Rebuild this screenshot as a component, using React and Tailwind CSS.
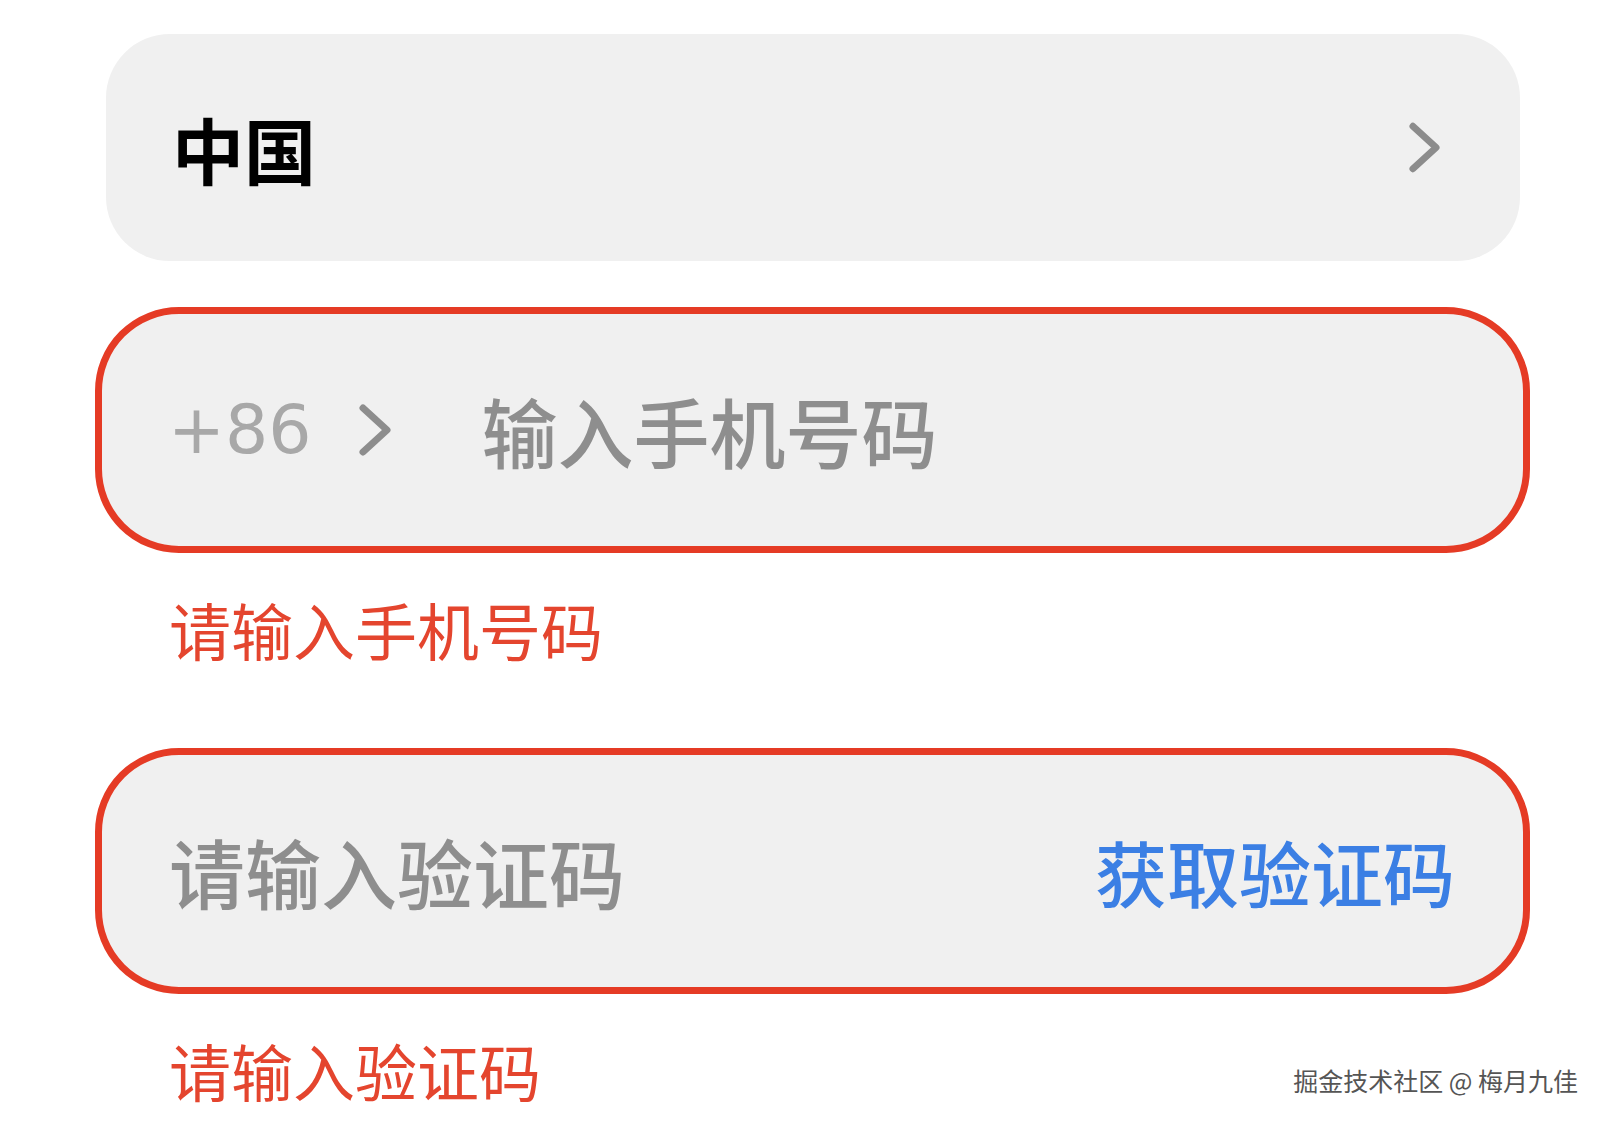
import React from 'react';

const cjk = "font-['Noto_Sans_CJK_SC','Noto_Sans',sans-serif]";

function Chevron({ className }) {
    return (
        <svg viewBox="0 0 32 52" className={className} fill="none">
            <polyline points="4,4 28,26 4,48" stroke="currentColor" strokeWidth="7" strokeLinecap="round" strokeLinejoin="round" />
        </svg>
    );
}

export default function App() {
    return (
        <div className={`relative w-full h-[1127px] bg-white overflow-hidden ${cjk}`}>
            <div className="flex flex-col pl-[95px] pt-[34px]">
                {/* region */}
                <div className="ml-[11px] w-[1414px] h-[227px] rounded-[64px] bg-[#f0f0f0] flex items-center justify-between pl-[66px] pr-[80px]">
                    <span className="text-[72px] leading-none font-bold text-black">中国</span>
                    <Chevron className="w-[31px] h-[53px] text-[#8c8c8c]" />
                </div>

                {/* phone */}
                <div className="mt-[46px] w-[1435px] h-[246px] rounded-[84px] border-[7px] border-[#e53b25] bg-[#f0f0f0] flex items-center pl-[66px]">
                    <span className="font-['DejaVu_Sans','Noto_Sans',sans-serif] text-[68px] leading-none text-[#a8a8a8]">+86</span>
                    <Chevron className="ml-[47px] w-[32px] h-[52px] text-[#8d8d8d]" />
                    <span className="ml-[91px] text-[76px] leading-none font-medium text-[#8e8e8e]">输入手机号码</span>
                </div>
                <div className="mt-[45px] pl-[74px] text-[62px] leading-none text-[#e4452e]">请输入手机号码</div>

                {/* code */}
                <div className="mt-[88px] w-[1435px] h-[246px] rounded-[84px] border-[7px] border-[#e53b25] bg-[#f0f0f0] flex items-center justify-between pl-[67px] pr-[68px]">
                    <span className="text-[76px] leading-none font-medium text-[#8e8e8e]">请输入验证码</span>
                    <span className="text-[72px] leading-none font-medium text-[#3b7fe4]">获取验证码</span>
                </div>
                <div className="mt-[45px] pl-[74px] text-[62px] leading-none text-[#e4452e]">请输入验证码</div>
            </div>

            <div className="absolute right-[29px] top-[1068px] text-[25px] leading-none text-[#555] [text-shadow:0_0_2px_#fff,0_0_1px_#fff]">
                掘金技术社区 @ 梅月九佳
            </div>
        </div>
    );
}
